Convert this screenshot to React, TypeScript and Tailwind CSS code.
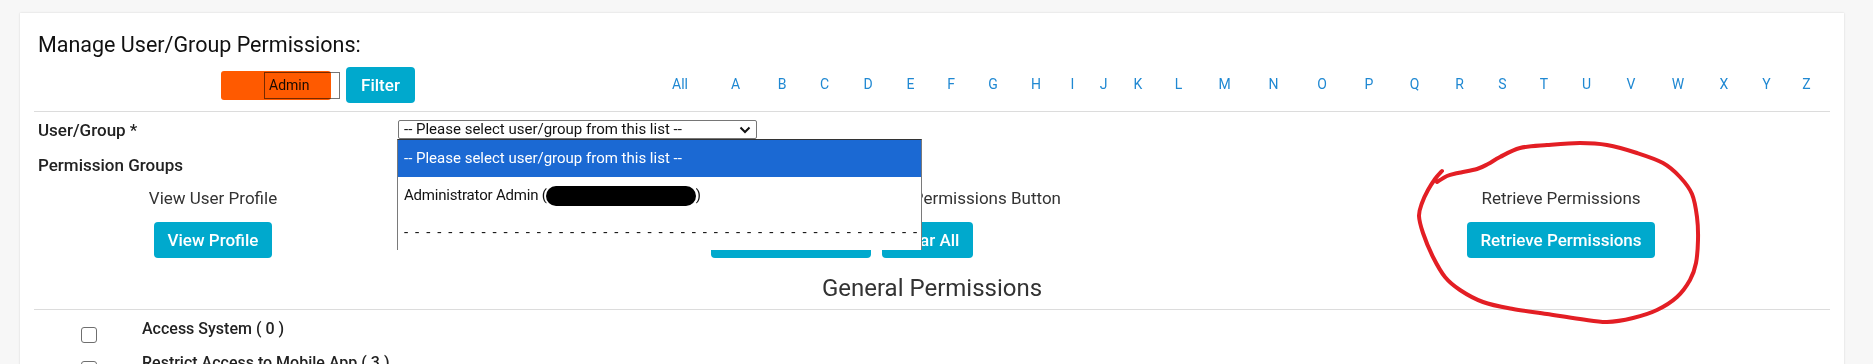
import React from "react";

const letters = [
  "All", "A", "B", "C", "D", "E", "F", "G", "H", "I", "J", "K", "L", "M",
  "N", "O", "P", "Q", "R", "S", "T", "U", "V", "W", "X", "Y", "Z",
];

type P = [number, number];

function smoothPath(pts: P[]): string {
  let d = `M${pts[0][0]},${pts[0][1]}`;
  for (let i = 0; i < pts.length - 1; i++) {
    const p0 = pts[i - 1] || pts[i];
    const p1 = pts[i];
    const p2 = pts[i + 1];
    const p3 = pts[i + 2] || p2;
    const c1x = p1[0] + (p2[0] - p0[0]) / 6;
    const c1y = p1[1] + (p2[1] - p0[1]) / 6;
    const c2x = p2[0] - (p3[0] - p1[0]) / 6;
    const c2y = p2[1] - (p3[1] - p1[1]) / 6;
    d += ` C${c1x.toFixed(1)},${c1y.toFixed(1)} ${c2x.toFixed(1)},${c2y.toFixed(1)} ${p2[0]},${p2[1]}`;
  }
  return d;
}

const circlePts: P[] = [
  [1437, 182], [1447, 176], [1458, 173], [1477, 169], [1488, 164], [1500, 157],
  [1520, 148], [1547, 145], [1580, 143], [1607, 145], [1637, 153], [1663, 163],
  [1680, 177], [1692, 194], [1697, 217], [1698, 240], [1696, 263], [1690, 280],
  [1677, 297], [1657, 310], [1633, 318], [1607, 322], [1580, 319], [1547, 314],
  [1513, 309], [1483, 302], [1460, 290], [1445, 277], [1433, 257], [1423, 233],
  [1419, 216], [1422, 203], [1428, 190], [1435, 179], [1442, 171],
];

function Btn({ children, className = "" }: { children: React.ReactNode; className?: string }) {
  return (
    <div
      className={
        "flex h-[36px] items-center justify-center whitespace-nowrap rounded-[4px] bg-[#00a9cd] text-[17px] font-medium leading-[24px] text-white " +
        className
      }
    >
      {children}
    </div>
  );
}

export default function App() {
  return (
    <div className="relative h-[364px] overflow-hidden bg-[#f7f7f7] pl-[20px] pr-[29px] pt-[13px] font-['Roboto',sans-serif] text-[#333]">
      <div className="h-[420px] bg-white px-[14px] pt-[18px] shadow-[0_0_2px_rgba(0,0,0,0.14)]">
        {/* Header */}
        <h4 className="pl-[4px] text-[21.5px] leading-[28px] text-[#111]">
          Manage User/Group Permissions:
        </h4>
        <div className="mt-[8px] flex h-[36px] items-center">
          <div className="flex w-[611px] items-center justify-center gap-[6px]">
            <div className="relative">
              <div className="flex h-[27px] w-[76px] items-center border border-[#767676] pl-[4px] text-[14px] text-[#1a1a1a]">
                Admin
              </div>
              <div className="pointer-events-none absolute left-[-43px] top-[-1px] h-[29px] w-[110px] rounded-[3px] bg-[#ff5a00] mix-blend-multiply" />
            </div>
            <Btn className="w-[69px]">Filter</Btn>
          </div>
          <div className="ml-[5px] grid grid-cols-[60px_51px_42px_43px_44px_41px_40px_44px_42px_31px_31px_38px_43px_49px_49px_48px_46px_45px_45px_41px_42px_43px_46px_48px_44px_41px_39px] pb-[3px] text-[14px] leading-[18px] text-[#1f88d2]">
            {letters.map((l) => (
              <span key={l} className="text-center">
                {l}
              </span>
            ))}
          </div>
        </div>
        <div className="mt-[8px] border-t border-[#dcdcdc]" />

        {/* User/Group */}
        <div className="mt-[8px] flex h-[20px] items-start">
          <div className="w-[364px] pl-[4px] text-[17px] font-medium leading-[20px] text-[#222]">
            User/Group *
          </div>
          <div className="relative z-10">
            <div className="flex h-[19px] w-[359px] items-center justify-between rounded-[2px] border border-[#767676] pl-[5px] pr-[5px] text-[15px] leading-[17px] text-[#111]">
              <span>-- Please select user/group from this list --</span>
              <svg width="12" height="8" viewBox="0 0 12 8" className="shrink-0">
                <path d="M1.5 1.5 L6 6 L10.5 1.5" fill="none" stroke="#111" strokeWidth="2" />
              </svg>
            </div>
            <div className="absolute left-[-1px] top-[19px] h-[111px] w-[525px] overflow-hidden border-x border-t border-x-[#7a7a7a] border-t-[#333] bg-white text-[15px] text-[#111]">
              <div className="flex h-[37px] items-center bg-[#1b69d3] pl-[6px] text-white">
                -- Please select user/group from this list --
              </div>
              <div className="flex h-[37px] items-center whitespace-nowrap pl-[6px] tracking-[-0.2px]">
                Administrator Admin (
                <span className="-ml-[1px] inline-block h-[20px] w-[150px] rounded-full bg-black" />
                )
              </div>
              <div className="flex h-[37px] items-center overflow-hidden whitespace-nowrap pl-[6px] tracking-[1.6px]">
                {"- ".repeat(70)}
              </div>
            </div>
          </div>
        </div>

        <div className="mt-[15px] pl-[4px] text-[17px] font-medium leading-[20px] text-[#222]">
          Permission Groups
        </div>

        {/* Three columns */}
        <div className="mt-[13px] grid grid-cols-[358px_900px_538px] text-[17px] leading-[20px]">
          <div className="flex flex-col items-center">
            <div>View User Profile</div>
            <Btn className="mt-[14px] w-[118px]">View Profile</Btn>
          </div>
          <div className="flex flex-col items-center">
            <div className="flex w-[438px] justify-end whitespace-nowrap">
              Select All / Clear All Permissions Button
            </div>
            <div className="mt-[14px] flex gap-[11px]">
              <Btn className="w-[160px]">Select All</Btn>
              <Btn className="w-[91px]">Clear All</Btn>
            </div>
          </div>
          <div className="flex flex-col items-center">
            <div>Retrieve Permissions</div>
            <Btn className="mt-[14px] w-[188px]">Retrieve Permissions</Btn>
          </div>
        </div>

        <div className="mt-[16px] text-center text-[24px] leading-[28px] text-[#333]">
          General Permissions
        </div>
        <div className="mt-[7px] border-t border-[#dcdcdc]" />

        <div className="pt-[9px]">
          {["Access System ( 0 )", "Restrict Access to Mobile App ( 3 )", "Manage Users ( 1 )"].map((t) => (
            <div key={t} className="flex h-[34px] items-start">
              <div className="ml-[47px] mt-[8px] h-[16px] w-[16px] rounded-[3px] border border-[#6f6f6f] bg-white" />
              <div className="ml-[45px] text-[16px] font-medium leading-[20px] text-[#222]">{t}</div>
            </div>
          ))}
        </div>
      </div>

      <svg
        className="pointer-events-none absolute left-0 top-0"
        width="1873"
        height="364"
        viewBox="0 0 1873 364"
      >
        <path
          d={smoothPath(circlePts)}
          fill="none"
          stroke="#e31e24"
          strokeWidth="4"
          strokeLinecap="round"
          strokeLinejoin="round"
        />
      </svg>
    </div>
  );
}
